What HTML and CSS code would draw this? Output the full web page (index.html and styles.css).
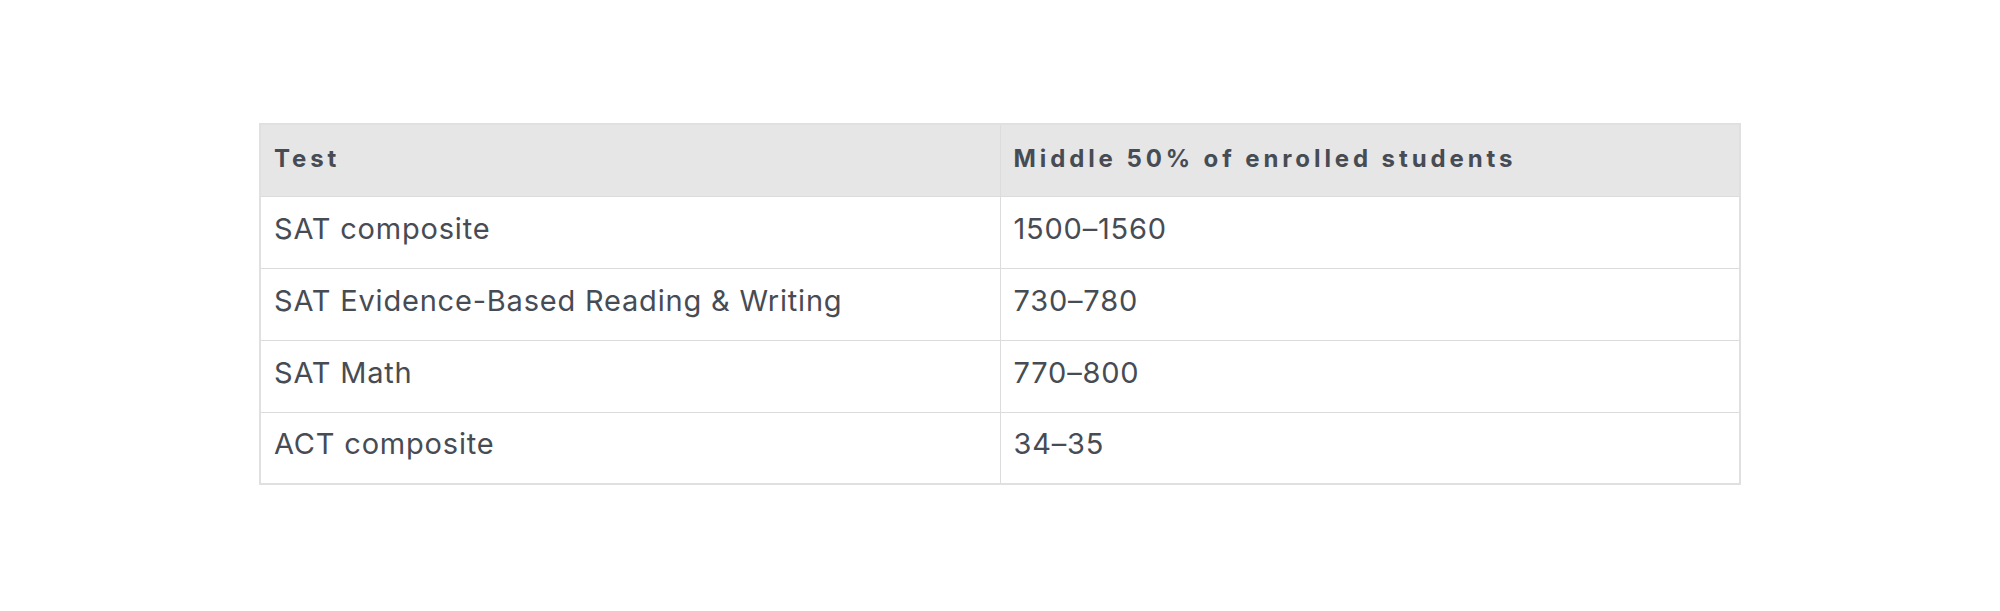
FILE: index.html
```html
<!DOCTYPE html>
<html lang="en">
<head>
<meta charset="utf-8">
<title>Test scores</title>
<link rel="stylesheet" href="styles.css">
</head>
<body>
<div class="page">
  <table class="scores">
    <thead>
      <tr><th>Test</th><th>Middle 50% of enrolled students</th></tr>
    </thead>
    <tbody>
      <tr><td>SAT composite</td><td>1500–1560</td></tr>
      <tr><td>SAT Evidence-Based Reading &amp; Writing</td><td>730–780</td></tr>
      <tr><td>SAT Math</td><td>770–800</td></tr>
      <tr><td>ACT composite</td><td>34–35</td></tr>
    </tbody>
  </table>
</div>
</body>
</html>
```
FILE: styles.css
```css
html, body {
  margin: 0;
  padding: 0;
  background: #ffffff;
}
.page {
  padding-top: 123px;
}
.scores {
  width: 1482px;
  margin: 0 auto;
  border-collapse: collapse;
  table-layout: fixed;
  font-family: Inter, "Liberation Sans", sans-serif;
  color: #474c54;
  border: 2px solid #e0e0e0;
}
.scores th, .scores td {
  width: 50%;
  height: 72px;
  padding: 0 0 0 13px;
  border: 1.5px solid #dcdcdc;
  text-align: left;
  vertical-align: middle;
  box-sizing: border-box;
}
.scores th {
  background: #e6e6e6;
  font-weight: 700;
  font-size: 24px;
  letter-spacing: 3.9px;
  padding-bottom: 4px;
}
.scores td {
  font-size: 29px;
  font-weight: 400;
  letter-spacing: 0.8px;
  padding-bottom: 8px;
}
```
